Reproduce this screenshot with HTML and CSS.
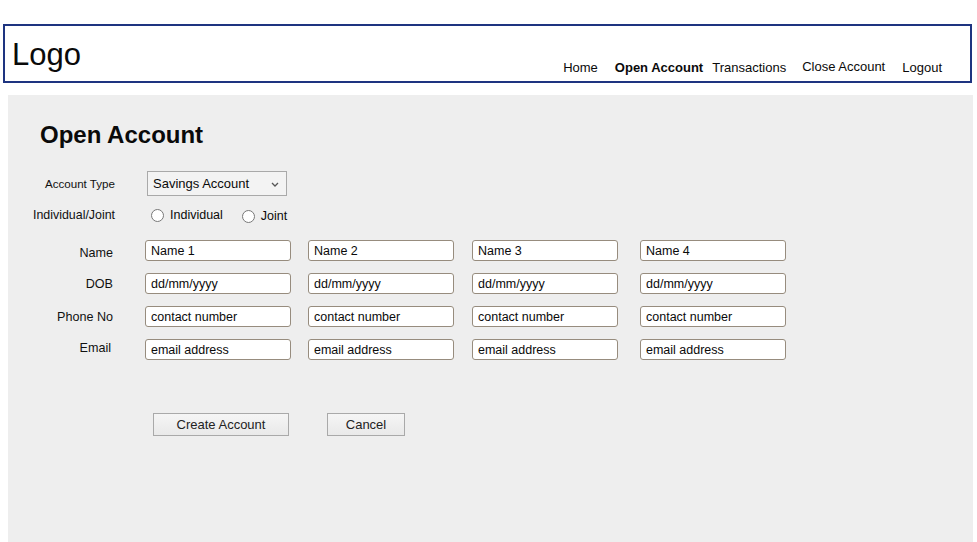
FILE: index.html
```html
<!DOCTYPE html>
<html lang="en">
<head>
<meta charset="utf-8">
<title>Open Account</title>
<link rel="stylesheet" href="styles.css">
</head>
<body>
<header class="header">
  <div class="logo">Logo</div>
  <nav class="nav">
    <a class="nav-link nav-home" href="#">Home</a>
    <a class="nav-link nav-active" href="#">Open Account</a>
    <a class="nav-link nav-trans" href="#">Transactions</a>
    <a class="nav-link nav-close" href="#">Close Account</a>
    <a class="nav-link" href="#">Logout</a>
  </nav>
</header>
<main class="panel">
  <h1 class="title">Open Account</h1>
  <div class="row row-select">
    <label class="row-label" for="acct">Account Type</label>
    <div class="select-wrap">
      <select id="acct" class="select">
        <option>Savings Account</option>
        <option>Current Account</option>
      </select>
      <svg class="chevron" width="8" height="5" viewBox="0 0 8 5"><path d="M1 1 L4 4 L7 1" fill="none" stroke="#555" stroke-width="1.3"/></svg>
    </div>
  </div>
  <div class="row row-radio">
    <span class="row-label label-ij">Individual/Joint</span>
    <div class="radios">
      <label class="radio"><input type="radio" name="type"><span>Individual</span></label>
      <label class="radio radio-joint"><input type="radio" name="type"><span>Joint</span></label>
    </div>
  </div>
  <div class="grid">
    <span class="grid-label label-name">Name</span>
    <input class="field" type="text" value="Name 1">
    <input class="field" type="text" value="Name 2">
    <input class="field" type="text" value="Name 3">
    <input class="field" type="text" value="Name 4">

    <span class="grid-label">DOB</span>
    <input class="field" type="text" value="dd/mm/yyyy">
    <input class="field" type="text" value="dd/mm/yyyy">
    <input class="field" type="text" value="dd/mm/yyyy">
    <input class="field" type="text" value="dd/mm/yyyy">

    <span class="grid-label">Phone No</span>
    <input class="field" type="text" value="contact number">
    <input class="field" type="text" value="contact number">
    <input class="field" type="text" value="contact number">
    <input class="field" type="text" value="contact number">

    <span class="grid-label label-email">Email</span>
    <input class="field field-email" type="text" value="email address">
    <input class="field field-email" type="text" value="email address">
    <input class="field field-email" type="text" value="email address">
    <input class="field field-email" type="text" value="email address">
  </div>
  <div class="actions">
    <button class="btn btn-create" type="button">Create Account</button>
    <button class="btn btn-cancel" type="button">Cancel</button>
  </div>
</main>
</body>
</html>
```
FILE: styles.css
```css
html, body {
  margin: 0;
  padding: 0;
  overflow: hidden;
  background: #ffffff;
}

body {
  font-family: "Liberation Sans", Arial, sans-serif;
  color: #111;
}

.header {
  box-sizing: border-box;
  margin: 24px 0 0 3px;
  width: 969px;
  height: 59px;
  border: 2px solid #1e3480;
  display: flex;
  align-items: flex-start;
  padding: 0 28px 0 7px;
}

.logo {
  font-size: 31px;
  line-height: 36px;
  margin-top: 11px;
  color: #0a0a0a;
}

.nav {
  margin-left: auto;
  margin-top: 34px;
  display: flex;
  gap: 14px;
}

.nav-link {
  font-size: 13px;
  line-height: 15px;
  color: #0a0a0a;
  text-decoration: none;
}

.nav-home { margin-right: 3px; }
.nav-active { font-weight: bold; margin-right: -5px; }
.nav-trans { margin-right: 2px; }
.nav-close { margin-top: -1px; margin-right: 3px; }

.panel {
  box-sizing: border-box;
  margin: 12px 0 0 8px;
  width: 965px;
  height: 447px;
  background: #eeeeee;
  padding-top: 26px;
}

.title {
  margin: 0 0 0 32px;
  font-size: 24px;
  line-height: 28px;
  font-weight: bold;
  color: #0a0a0a;
}

.row {
  display: flex;
  align-items: center;
}

.row-label {
  width: 107px;
  text-align: right;
  font-size: 12px;
  color: #111;
}

.label-ij {
  font-size: 12.4px;
}

.row-select {
  margin-top: 22px;
  height: 25px;
}

.row-select .row-label {
  font-size: 11.6px;
}

.select-wrap {
  position: relative;
  margin-left: 32px;
}

.select {
  appearance: none;
  -webkit-appearance: none;
  box-sizing: border-box;
  width: 140px;
  height: 25px;
  border: 1px solid #a9a9a9;
  border-radius: 0;
  background: #f3f3f3;
  font-family: "Liberation Sans", Arial, sans-serif;
  font-size: 13px;
  color: #0a0a0a;
  padding: 0 0 0 5px;
  display: block;
}

.chevron {
  position: absolute;
  right: 8px;
  top: 11px;
  pointer-events: none;
}

.row-radio {
  margin-top: 9px;
  height: 20px;
}

.radios {
  display: flex;
  align-items: center;
  margin-left: 36px;
}

.radio {
  display: flex;
  align-items: center;
  font-size: 12.5px;
  color: #0a0a0a;
}

.radio input {
  margin: 0 6px 0 0;
  width: 13px;
  height: 13px;
}

.radio-joint {
  margin-left: 19px;
  margin-top: 2px;
}

.grid {
  margin-top: 15px;
  display: grid;
  grid-template-columns: 137px 163px 164px 168px 146px;
  grid-auto-rows: 21px;
  row-gap: 12px;
  align-items: center;
}

.grid-label {
  text-align: right;
  padding-right: 32px;
  font-size: 12.6px;
  color: #111;
}

.label-name { margin-top: 4px; }
.label-email { margin-top: -4px; padding-right: 34px; }

.field {
  box-sizing: border-box;
  width: 146px;
  height: 21px;
  border: 1px solid #978c7e;
  border-radius: 3px;
  background: #ffffff;
  font-family: "Liberation Sans", Arial, sans-serif;
  font-size: 12.5px;
  color: #0a0a0a;
  padding: 0 0 0 5px;
  margin: 0;
}

.actions {
  margin-top: 53px;
  padding-left: 145px;
  display: flex;
  gap: 38px;
}

.btn {
  box-sizing: border-box;
  height: 23px;
  border: 1px solid #a9a9a9;
  border-radius: 0;
  background: linear-gradient(#f5f5f5, #e9e9e9);
  font-family: "Liberation Sans", Arial, sans-serif;
  font-size: 13px;
  color: #222;
  padding: 0;
}

.btn-create { width: 136px; }
.btn-cancel { width: 78px; }
```
